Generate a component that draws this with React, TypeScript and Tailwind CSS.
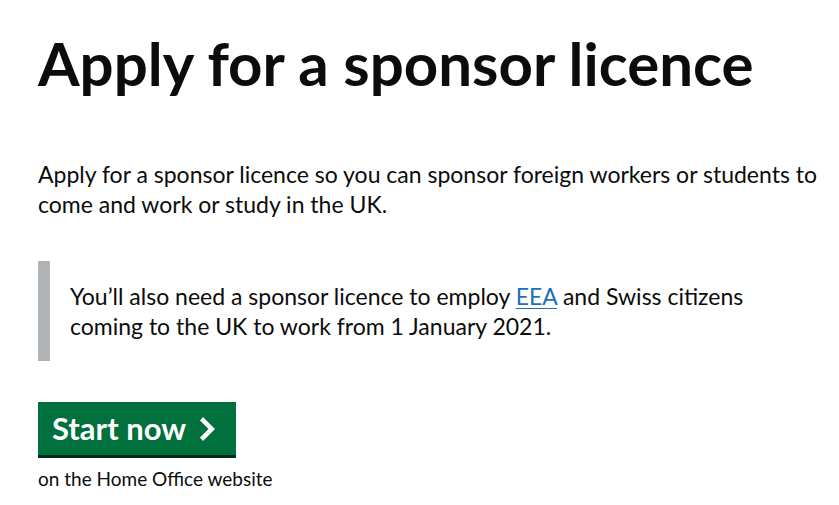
export default function App() {
  return (
    <div className="min-h-[505px] bg-white text-[#0b0c0c] font-['Lato','Liberation_Sans',sans-serif]">
      <main className="pl-[38px] pt-[32px] flex flex-col items-start">
        <h1 className="text-[60px] leading-[62px] font-bold">Apply for a sponsor licence</h1>

        <p className="mt-[65px] text-[23px] leading-[30px]">
          Apply for a sponsor licence so you can sponsor foreign workers or students to
          <br />
          come and work or study in the UK.
        </p>

        {/* Inset text */}
        <div className="mt-[42px] border-l-[12px] border-[#b1b4b6] pl-[20px] py-[20px]">
          <p className="text-[23px] leading-[30px]">
            You’ll also need a sponsor licence to employ{' '}
            <a href="#" className="text-[#1d70b8] underline underline-offset-[3px] decoration-1">EEA</a>{' '}
            and Swiss citizens
            <br />
            coming to the UK to work from 1 January 2021.
          </p>
        </div>

        <a
          href="#"
          className="mt-[41px] flex items-center gap-[14px] bg-[#00703c] text-white font-bold text-[31px] leading-none pl-[14px] pr-[18px] pt-[11px] pb-[11px] shadow-[0_3px_0_#002d18]"
        >
          Start now
          <svg width="18" height="24" viewBox="0 0 18 24" fill="currentColor" aria-hidden="true">
            <path d="M3 0 L0 3.5 L8.5 12 L0 20.5 L3 24 L15 12 Z" />
          </svg>
        </a>

        <p className="mt-[12px] text-[19px] leading-[24px]">on the Home Office website</p>
      </main>
    </div>
  );
}
